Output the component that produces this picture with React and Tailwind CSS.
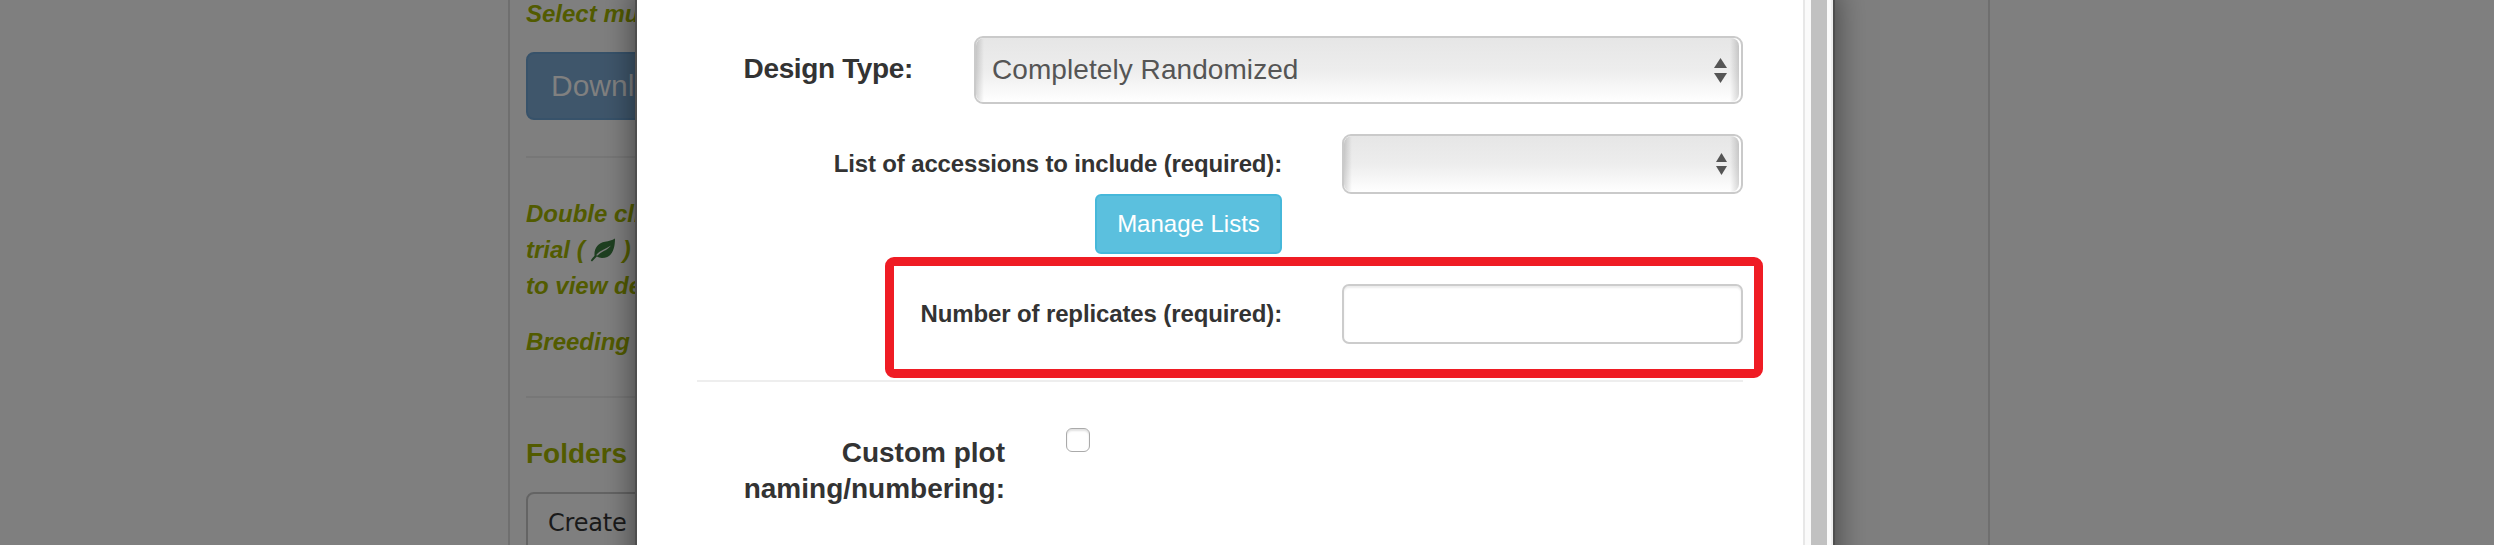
function Arrows({ w, h, gap }) {
  const total = h * 2 + gap;
  return (
    <svg width={w} height={total} viewBox={`0 0 ${w} ${total}`} fill="#555">
      <path d={`M${w / 2} 0L${w} ${h}H0Z`} />
      <path d={`M0 ${h + gap}H${w}L${w / 2} ${total}Z`} />
    </svg>
  );
}

function Select({ className, children, arrows }) {
  return (
    <div className={`flex shrink-0 rounded-[9px] border-2 border-[#cacaca] bg-white pr-[2px] ${className}`}>
      <div className="flex grow items-center justify-between rounded-[8px] bg-[linear-gradient(90deg,#00000026,transparent_8px,transparent_calc(100%-9px),#00000026),linear-gradient(180deg,#e6e6e6,#ededed_50%,#fff)] pl-4 pr-3">
        <span className="tracking-[0.07px]">{children}</span>
        {arrows}
      </div>
    </div>
  );
}

function Page() {
  return (
    <div className="flex h-[545px] w-full overflow-hidden bg-[#7f7f7f] pl-[508px]">
      <div className="h-full w-[1482px] overflow-hidden border-x-2 border-[#6f6f6f] pl-4 text-[#525b00]">
        <div className="flex w-[300px] flex-col whitespace-nowrap text-2xl/[36px] font-bold italic">
          <div className="-mt-1 h-14 shrink-0">Select multiple</div>
          <div className="flex h-[68px] items-center rounded-[8px] border-2 border-[#37526a] bg-[#3f566b] pl-[23px] text-[30px] font-normal not-italic text-[#808080]">
            Download
          </div>
          <div className="mt-9 h-[2px] bg-[#777]" />
          <div className="mt-[38px]">Double click</div>
          <div className="flex">
            trial (
            <svg className="ml-[5px] mt-[6px]" width="26" height="24" viewBox="0 0 26 24">
              <path
                d="M25 0.5C25 11 22 20 12 20C10 20 8.2 19.4 6.8 18.6L2 23.5L0.8 22.5C2 20.5 3.5 19 4.5 17.8C4 10 8 5 15 3.7C19 3 22 2.5 25 .5Z"
                fill="#1e3f20"
              />
              <path d="M6 17.3C10 12 15 11.5 21 7.5C16.5 13 12 13 7.6 17.4Z" fill="#7d7d7d" />
            </svg>
            <span className="ml-[7px]">)</span>
          </div>
          <div>to view details</div>
          <div className="mt-5">Breeding programs</div>
          <div className="mt-9 h-[2px] bg-[#777]" />
        </div>
        <div className="mt-9 text-[28px]/[40px] font-bold">Folders</div>
        <div className="mt-[18px] flex h-[68px] w-[300px] items-center rounded-[8px] border-2 border-[#646464] pb-[6px] pl-5 font-['DejaVu_Sans',sans-serif] text-2xl tracking-[-0.2px] text-[#1a1a1a]">
          Create
        </div>
      </div>
    </div>
  );
}

function Modal() {
  return (
    <div className="absolute -top-5 left-[635px] flex h-[600px] w-[1200px] border-2 border-[#4e4e4e] bg-white bg-clip-padding pt-[18px] text-[#333] shadow-[0_10px_30px_rgba(0,0,0,0.5)]">
      <div className="flex h-[545px] w-[1166px] flex-col pl-[60px] pr-[60px] pt-9">
        <div className="flex h-[68px] items-center justify-end">
          <div className="mr-[61px] pb-[2px] text-[28px] font-bold tracking-[-0.36px]">Design Type:</div>
          <Select className="h-[68px] w-[769px] text-[28px] text-[#555]" arrows={<Arrows w={13} h={10} gap={5} />}>
            Completely Randomized
          </Select>
        </div>
        <div className="mt-[30px] flex items-start justify-end gap-[60px]">
          <div className="flex flex-col items-end">
            <div className="h-[60px] text-2xl/[60px] font-bold tracking-[-0.16px]">
              List of accessions to include (required):
            </div>
            <button className="h-[60px] w-[187px] rounded-[6px] border-2 border-[#46b8da] bg-[#5bc0de] text-2xl text-white">
              Manage Lists
            </button>
          </div>
          <Select className="h-[60px] w-[401px]" arrows={<Arrows w={11} h={9} gap={4} />} />
        </div>
        <div className="-mr-5 ml-[188px] mt-[3px] flex h-[121px] shrink-0 items-start justify-end rounded-[9px] border-[9px] border-[#ef1c24] pr-[11px] pt-[18px]">
          <div className="mr-[60px] text-2xl/[60px] font-bold tracking-[-0.12px]">Number of replicates (required):</div>
          <input className="h-[60px] w-[401px] rounded-[7px] border-2 border-[#ccc] bg-white shadow-[inset_0_2px_2px_rgba(0,0,0,0.075)]" />
        </div>
        <div className="mt-[2px] h-[2px] shrink-0 bg-[#eee]" />
        <div className="mt-[46px] flex">
          <div className="mr-[61px] mt-[7px] w-[308px] text-right text-[28px]/[36px] font-bold">
            Custom plot naming/numbering:
          </div>
          <div className="h-6 w-6 rounded-[6px] border border-[#aaa] bg-white shadow-[inset_0_2px_2px_rgba(0,0,0,0.12)]" />
        </div>
      </div>
      <div className="-mt-[18px] flex w-[30px] border-l-2 border-r-2 border-l-[#e7e7e7] border-r-[#ededed] bg-[#fafafa] pl-[6px]">
        <div className="w-4 bg-[#c1c1c1]" />
      </div>
    </div>
  );
}

export default function App() {
  return (
    <div className="relative h-[545px] overflow-hidden font-['Liberation_Sans',Arial,sans-serif]">
      <Page />
      <Modal />
    </div>
  );
}
